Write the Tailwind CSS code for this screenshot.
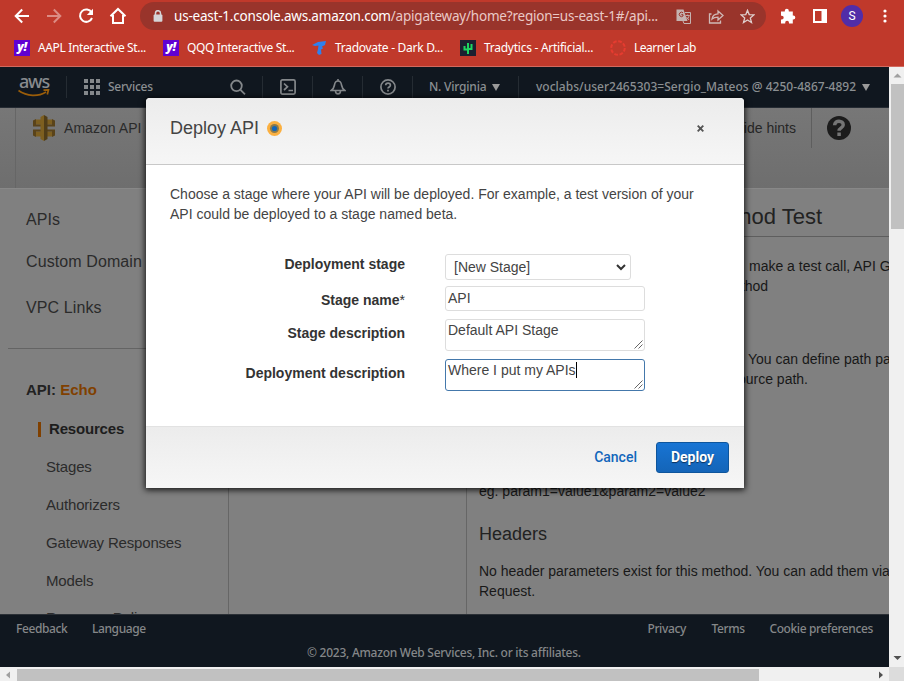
<!DOCTYPE html>
<html lang="en">
<head>
<meta charset="utf-8">
<title>API Gateway</title>
<script src="https://cdn.jsdelivr.net/npm/@tailwindcss/browser@4"></script>
</head>
<body class="w-[904px] h-[681px] overflow-hidden relative flex flex-col bg-[#808080] font-['Liberation_Sans',Arial,sans-serif] text-[14px] leading-[20px] text-[#222]">

<!-- Browser toolbar -->
<header class="h-[67px] shrink-0 bg-[#c0392b] border-b border-[#d2695e] font-['Noto_Sans',sans-serif] text-white">
  <div class="h-[32px] flex items-center pl-[14px]">
    <svg class="w-4 h-4 shrink-0" viewBox="0 0 16 16" fill="none" stroke="#fff" stroke-width="2"><path d="M15 8H2M8.2 1.5 1.7 8l6.500 6.500"/></svg>
    <svg class="w-4 h-4 shrink-0 ml-4" viewBox="0 0 16 16" fill="none" stroke="#dc8c84" stroke-width="2"><path d="M1 8h13M7.800 1.500 14.300 8l-6.500 6.500"/></svg>
    <svg class="w-4 h-4 shrink-0 ml-4" viewBox="0 0 16 16"><path d="M13.600 4.500A6.200 6.200 0 1 0 14 10" fill="none" stroke="#fff" stroke-width="2"/><path d="M15 .8v6.200H8.800z" fill="#fff"/></svg>
    <svg class="w-[18px] h-[18px] shrink-0 ml-[15px]" viewBox="0 0 18 18" fill="none" stroke="#fff" stroke-width="2"><path d="M1.500 9.300 9 2l7.500 7.300M4 8v8h10V8"/></svg>
    <div class="ml-[13px] w-[626px] h-[28px] rounded-full bg-[#99342b] flex items-center">
      <svg class="w-[10px] h-[12px] ml-[13px] shrink-0" viewBox="0 0 10 12"><path d="M2.500 5V3.200a2.500 2.500 0 0 1 5 0V5" fill="none" stroke="#d5d5d8" stroke-width="1.500"/><rect x=".6" y="4.400" width="8.800" height="7.400" rx="1" fill="#d5d5d8"/></svg>
      <span class="ml-[11px] w-[489px] whitespace-nowrap text-[13.5px] text-[#e9c9c6] tracking-[-0.21px]"><span class="text-white">us-east-1.console.aws.amazon.com</span>/apigateway/home?region=us-east-1#/api...</span>
      <svg class="w-[15px] h-[15px] ml-[13px] shrink-0" viewBox="0 0 15 15"><path d="M.5.500h7L11.500 12H.5z" fill="#c5b3b1"/><path d="M9 3.500h5.500v11H8L7 12" fill="none" stroke="#c5b3b1"/><path d="M7 3.800A2.200 2.200 0 1 0 7 7V5.700H5.300" fill="none" stroke="#99342b"/><path d="M9.700 6.500h4M11.700 5.500v1M10.300 10.500c2-1 2.500-2 2.700-4M10.500 8l2.500 3" fill="none" stroke="#c5b3b1" stroke-width=".9"/></svg>
      <svg class="w-[16px] h-[15px] ml-[17px] shrink-0" viewBox="0 0 16 15" fill="none" stroke="#d0b9b7" stroke-width="1.300"><path d="M3.500 5H1.500v9h11v-2.500"/><path d="M4 10c.5-3.500 2.500-5 6-5.200V2l5 4.500L10 11V8.200C7.500 8.200 5.500 8.700 4 10z"/></svg>
      <svg class="w-[15px] h-[15px] ml-[16px] shrink-0" viewBox="0 0 15 15" fill="none" stroke="#dfcfcd" stroke-width="1.300"><path d="m7.500 1.300 1.700 4.300 4.700.3-3.600 3 1.200 4.600-4-2.500-4 2.500 1.200-4.600-3.600-3 4.700-.3z"/></svg>
    </div>
    <svg class="w-[16px] h-[16px] ml-[14px] shrink-0" viewBox="0 0 16 16" fill="#fff"><path d="M1 3.500h3.800V2.800a2 2 0 0 1 4 0v.7h4v4h.5a2 2 0 0 1 0 4h-.5v4H9v-.8a1.900 1.900 0 0 0-3.800 0v.8H1v-4h.8a1.900 1.900 0 0 0 0-3.800H1z"/></svg>
    <svg class="w-[14px] h-[14px] ml-[17px] shrink-0" viewBox="0 0 14 14"><path d="M0 0h14v14H0z" fill="#fff"/><path d="M2 2h6.500v10H2z" fill="#c0392b"/></svg>
    <span class="ml-[14px] w-[22px] h-[22px] rounded-full bg-[#512da8] text-[12px] leading-[22px] text-center font-['Roboto',sans-serif] shrink-0">S</span>
    <svg class="w-[4px] h-[14px] ml-[20px] shrink-0" viewBox="0 0 4 14" fill="#fff"><circle cx="2" cy="2" r="1.600"/><circle cx="2" cy="7" r="1.600"/><circle cx="2" cy="12" r="1.600"/></svg>
  </div>
  <nav class="h-[32px] flex items-center pl-[14px] text-[12px] tracking-[-0.36px] whitespace-nowrap">
    <span class="w-[149px] flex items-center gap-[8px]"><i class="w-4 h-4 bg-[#6001d2] text-[12px] leading-[14px] font-black text-center">y!</i>AAPL Interactive St...</span>
    <span class="w-[149px] flex items-center gap-[8px]"><i class="w-4 h-4 bg-[#6001d2] text-[12px] leading-[14px] font-black text-center">y!</i>QQQ Interactive St...</span>
    <span class="w-[148px] flex items-center gap-[7px] tracking-[-0.28px]"><svg class="w-4 h-4 shrink-0" viewBox="0 0 16 16" fill="#2f80ed"><path d="M0 5 6 2l8-1-1 4-3 1.500 1 2-2 1 .5 4.500L7 15l-2-2 1-4 .5-3.500L3 6z"/></svg>Tradovate - Dark D...</span>
    <span class="w-[150px] flex items-center gap-[8px] tracking-[-0.26px]"><svg class="w-4 h-4 shrink-0" viewBox="0 0 16 16"><path d="M0 0h16v16H0z" fill="#1c2030"/><path d="M8 14V3M4.500 6v3.500H8M11.500 4v5H8" fill="none" stroke="#1ed760" stroke-width="2"/></svg>Tradytics - Artificial...</span>
    <span class="flex items-center gap-[8px] tracking-[-0.5px]"><svg class="w-4 h-4 shrink-0" viewBox="0 0 16 16"><circle cx="8" cy="8" r="6.800" fill="none" stroke="#e63c30" stroke-width="2" stroke-dasharray="3.700 1.640"/></svg>Learner Lab</span>
  </nav>
</header>

<div class="flex h-[600px] shrink-0">
  <!-- Console page -->
  <div class="w-[889px] h-[600px] flex flex-col overflow-hidden">
    <nav class="h-[41px] shrink-0 bg-[#10171f] border-b border-[#252b33] flex items-start pt-[9px] font-['Noto_Sans',sans-serif] text-[12px] font-medium text-[#8b8f92] whitespace-nowrap">
      <div class="w-[67px] h-[22px] border-r border-[#252c33] pl-[18px]">
        <span class="block text-[18px] leading-[15px] -mt-[2px] pl-[1px] font-medium tracking-[-1.2px] text-[#888b8e]">aws</span>
        <svg class="w-[32px] h-[8px]" viewBox="0 0 32 8" fill="none" stroke="#9a5d09" stroke-width="1.700"><path d="M.5 1.500C9 7.500 20 8 28 3M25.500 1.200l5-.4-1.200 4.700"/></svg>
      </div>
      <div class="w-[196px] h-[22px] border-r border-[#252c33] flex items-center">
        <svg class="w-4 h-4 ml-[17px]" viewBox="0 0 16 16" fill="#84888b"><path d="M0 0h4v4H0zM6 0h4v4H6zM12 0h4v4h-4zM0 6h4v4H0zM6 6h4v4H6zM12 6h4v4h-4zM0 12h4v4H0zM6 12h4v4H6zM12 12h4v4h-4z"/></svg>
        <span class="ml-[8px] w-[45px] tracking-[-0.25px]">Services</span>
        <svg class="w-4 h-4 ml-[77px]" viewBox="0 0 16 16" fill="none" stroke="#84888b" stroke-width="1.800"><circle cx="6.500" cy="6.800" r="5.300"/><path d="m10.500 10.800 4.500 4.500"/></svg>
      </div>
      <div class="w-[50px] h-[22px] border-r border-[#252c33] flex items-center justify-center"><svg class="w-4 h-4" viewBox="0 0 16 16" fill="none" stroke="#84888b" stroke-width="1.700"><rect x=".9" y=".9" width="14.200" height="14.200" rx="1.500"/><path d="m4 4.500 3.500 3.300L4 11M8.500 11.500H13"/></svg></div>
      <div class="w-[50px] h-[22px] border-r border-[#252c33] flex items-center justify-center"><svg class="w-4 h-4" viewBox="0 0 16 16" fill="none" stroke="#84888b" stroke-width="1.600"><path d="M8 0v2M1.200 11.500c2-1.500 2.900-3 3.300-5.500C4.800 3.500 6 2 8 2s3.200 1.500 3.500 4c.4 2.500 1.300 4 3.300 5.500zM5.500 12c0 3.800 5 3.800 5 0"/></svg></div>
      <div class="w-[50px] h-[22px] border-r border-[#252c33] flex items-center justify-center"><svg class="w-4 h-4" viewBox="0 0 16 16" fill="none" stroke="#84888b" stroke-width="1.700"><circle cx="8" cy="8" r="7.100"/><path d="M5.700 6.300c0-3 4.700-3 4.700 0C10.400 8 8 8 8 9.600M8 10.800v1.800"/></svg></div>
      <div class="w-[106px] h-[22px] border-r border-[#252c33] flex items-center pl-[16px]"><span class="w-[63px] tracking-[-0.2px]">N. Virginia</span><svg class="w-2 h-[7px]" viewBox="0 0 8 7"><path d="M0 0h8L4 7z" fill="#9a9a9a"/></svg></div>
      <div class="h-[22px] flex items-center pl-[17px]"><span class="w-[326px] tracking-[0.02px]">voclabs/user2465303=Sergio_Mateos @ 4250-4867-4892</span><svg class="w-2 h-[7px]" viewBox="0 0 8 7"><path d="M0 0h8L4 7z" fill="#9a9a9a"/></svg></div>
    </nav>

    <div class="h-[81px] shrink-0 bg-linear-to-b from-[#777] to-[#6e6e6e] border-b border-[#888] flex">
      <div class="w-[16px] border-r border-[#666]"></div>
      <svg class="w-[22px] h-[26px] ml-[17px] mt-[7px]" viewBox="0 0 22 26"><path d="M3 4.500h5v5H3zM14 4.500h5v5h-5zM3 16.500h5v5H3zM14 16.500h5v5h-5z" fill="#7d5f20"/><path d="M0 5.500l3-1.500v5.500h5v2H0zM22 5.500 19 4v5.500h-5v2h8zM0 14.500h8v2H3V22l-3-1.500zM22 14.500h-8v2h5V22l3-1.500z" fill="#5a4319"/><path d="M7.500 2 11 0v26l-3.500-2z" fill="#7d5f20"/><path d="M11 0l3.500 2v22L11 26z" fill="#503d18"/></svg>
      <span class="ml-[9px] mt-[10px] w-[620px] text-[#2a2a2a] text-[14px] tracking-[0.05px] whitespace-nowrap">Amazon API Gateway</span>
      <div class="w-[128px] h-[40px] border-r border-[#5e5e5e] pt-[10px] pr-[15px] text-right text-[#262626]">Hide hints</div>
      <svg class="w-6 h-6 ml-[15px] mt-[8px]" viewBox="0 0 24 24"><circle cx="12" cy="12" r="12" fill="#1c1c1c"/><path d="M7.600 9.300C7.800 3.500 16.400 4.200 16.200 9c-.1 3-4.100 2.700-4.100 5.800M12.100 16.600v3.500" fill="none" stroke="#757575" stroke-width="3.500"/></svg>
    </div>

    <div class="flex h-[425px] shrink-0 bg-[#808080] overflow-hidden">
      <aside class="w-[229px] border-r border-[#666] pl-[8px] text-[#2b2b2b] whitespace-nowrap">
        <ul class="pl-[18px] pt-[21px] text-[16px] tracking-[0.1px] border-b border-[#646464] h-[160px]">
          <li class="h-[42px]">APIs</li>
          <li class="h-[46px]">Custom Domain Names</li>
          <li>VPC Links</li>
        </ul>
        <div class="pl-[18px] pt-[31px] h-[66px] text-[15px] font-bold text-[#222]">API: <span class="text-[#804000]">Echo</span></div>
        <ul class="pl-[30px] text-[15px] tracking-[-0.18px]">
          <li class="h-[42px] pt-[4px] flex items-start font-bold text-[#1d1d1d]"><i class="w-[3px] h-[15px] mt-[3px] bg-[#804000] mr-[8px]"></i>Resources</li>
          <li class="h-[38px] pl-[8px]">Stages</li>
          <li class="h-[38px] pl-[8px]">Authorizers</li>
          <li class="h-[38px] pl-[8px]">Gateway Responses</li>
          <li class="h-[37px] pl-[8px]">Models</li>
          <li class="h-[38px] pl-[8px]">Resource Policy</li>
        </ul>
      </aside>
      <div class="w-[238px] border-r border-[#666]"></div>
      <main class="w-[422px] pl-[12px] text-[#181818] whitespace-nowrap overflow-hidden">
        <h1 class="h-[48px] w-[500px] border-b border-[#5e5e5e] pt-[18px] text-[22px] text-[#222]"><span class="block w-[343px] text-right">Method Test</span></h1>
        <p class="pl-[270px] pt-[19px]">make a test call, API G</p>
        <p class="w-[289px] text-right">method</p>
        <p class="pl-[269px] pt-[53px]">You can define path pa</p>
        <p class="w-[329px] text-right">resource path.</p>
        <p class="pt-[92px]">eg. param1=value1&amp;param2=value2</p>
        <h2 class="pt-[23px] text-[18px] text-[#222]">Headers</h2>
        <p class="pt-[17px]">No header parameters exist for this method. You can add them via Method</p>
        <p>Request.</p>
      </main>
    </div>

    <footer class="h-[53px] shrink-0 bg-[#10171f] border-t border-[#2b3036] px-[16px] pt-[4px] font-['Noto_Sans',sans-serif] text-[12px] tracking-[-0.38px] font-medium text-[#858789] whitespace-nowrap">
      <div class="flex h-[24px]"><span class="w-[76px]">Feedback</span><span class="w-[556px]">Language</span><span class="w-[64px]">Privacy</span><span class="w-[58px]">Terms</span><span>Cookie preferences</span></div>
      <p class="pl-[291px] tracking-[-0.26px]">© 2023, Amazon Web Services, Inc. or its affiliates.</p>
    </footer>
  </div>

  <div class="w-[15px] bg-[#f0f0f0] pl-[2px] flex flex-col">
    <svg class="w-[13px] h-[17px] shrink-0" viewBox="0 0 13 17"><path d="M6.500 6.500 10.500 10.500h-8z" fill="#a0a0a0"/></svg>
    <div class="h-[145px] bg-[#c1c1c1]"></div>
    <svg class="w-[13px] h-[17px] mt-auto shrink-0" viewBox="0 0 13 17"><path d="M2.500 6h8l-4 4z" fill="#505050"/></svg>
  </div>
</div>

<div class="h-[14px] shrink-0 bg-[#f0f0f0] flex pt-[2px]">
  <svg class="w-[17px] h-[12px]" viewBox="0 0 17 12"><path d="M10 2.500v7L6 6z" fill="#a0a0a0"/></svg>
  <div class="w-[742px] bg-[#c1c1c1]"></div>
  <svg class="w-[17px] h-[12px] ml-[113px]" viewBox="0 0 17 12"><path d="M7 2.500v7L11 6z" fill="#505050"/></svg>
  <div class="w-[15px] -mt-[2px] bg-[#dcdcdc]"></div>
</div>

<!-- Deploy dialog -->
<section class="absolute left-[146px] top-[98px] w-[598px] h-[390px] rounded-t-[4px] bg-white text-[#444] flex flex-col overflow-hidden shadow-[0_1px_6px_1px_rgba(0,0,0,0.85)]">
  <div class="h-[67px] shrink-0 bg-linear-to-b from-[#ececec] to-[#f6f6f6] border-b border-[#c8c8c8] flex items-start pl-[24px]">
    <h2 class="pt-[20px] text-[18px] w-[97px] text-[#444]">Deploy API</h2>
    <svg class="w-[15px] h-[15px] mt-[23px]" viewBox="0 0 15 15"><circle cx="7.500" cy="7.500" r="7.500" fill="#fbb040"/><circle cx="7.500" cy="7.500" r="4.500" fill="#8b7a4c"/><circle cx="7.500" cy="7.500" r="2.600" fill="#1166bb"/></svg>
    <svg class="w-[7px] h-[7px] mt-[27px] ml-[415px]" viewBox="0 0 7 7" stroke="#555" stroke-width="1.900"><path d="m.7.700 5.600 5.600M6.300.700.7 6.300"/></svg>
  </div>
  <div class="h-[261px] shrink-0 pl-[24px] pt-[19px]">
    <p class="whitespace-nowrap">Choose a stage where your API will be deployed. For example, a test version of your<br>API could be deployed to a stage named beta.</p>
    <div class="mt-[30px] grid grid-cols-[235px_200px] gap-x-[40px] grid-rows-[32px_33px_40px_32px] whitespace-nowrap">
      <b class="text-right text-[#333]">Deployment stage</b>
      <div class="w-[186px] h-[26px] border border-[#ddd] rounded-[3px] pl-[8px] flex items-center">[New Stage]<svg class="ml-auto mr-[4px] w-[10px] h-[7px]" viewBox="0 0 10 7" fill="none" stroke="#333" stroke-width="2"><path d="m1 1 4 4 4-4"/></svg></div>
      <b class="text-right text-[#333] pt-[4px]">Stage name<span class="font-normal">*</span></b>
      <div class="h-[25px] border border-[#ddd] rounded-[3px] pl-[2px] leading-[22px]">API</div>
      <b class="text-right text-[#333] pt-[4px]">Stage description</b>
      <div class="h-[32px] border border-[#ddd] rounded-[3px] pl-[2px] flex justify-between items-end"><span class="self-start">Default API Stage</span><svg class="w-[9px] h-[9px] m-[1px]" viewBox="0 0 9 9" stroke="#555" stroke-width=".9"><path d="m.5 8.500 8-8M4.500 8.500l4-4"/></svg></div>
      <b class="text-right text-[#333] pt-[4px]">Deployment description</b>
      <div class="h-[32px] border border-[#4478ab] rounded-[3px] pl-[2px] flex justify-between items-end"><span class="self-start flex items-center">Where I put my APIs<i class="w-[1px] h-[16px] bg-black"></i></span><svg class="w-[9px] h-[9px] m-[1px]" viewBox="0 0 9 9" stroke="#555" stroke-width=".9"><path d="m.5 8.500 8-8M4.500 8.500l4-4"/></svg></div>
    </div>
  </div>
  <div class="h-[62px] shrink-0 border-t border-[#e2e2e2] bg-linear-to-b from-[#ececec] to-[#f6f6f6] flex items-center justify-end pr-[15px] font-['Roboto',sans-serif] text-[14px]">
    <span class="text-[#1166bb] font-medium mr-[19px] -mt-[1px]">Cancel</span>
    <span class="w-[73px] h-[31px] rounded-[3px] border border-[#0e559c] bg-linear-to-b from-[#1874d4] to-[#1465b8] text-white font-bold leading-[29px] text-center [text-shadow:0_1px_1px_#0008]">Deploy</span>
  </div>
</section>
</body>
</html>
